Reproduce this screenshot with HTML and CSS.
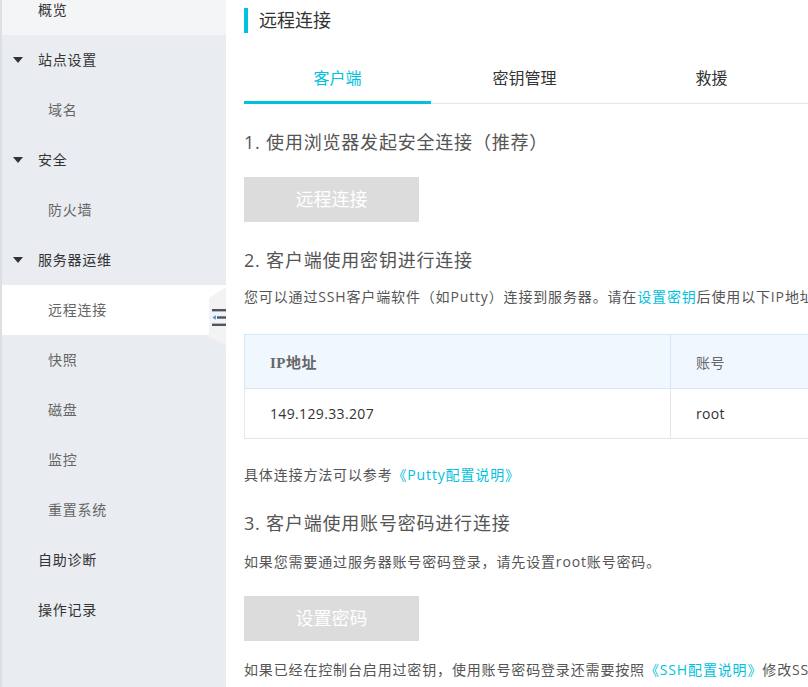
FILE: index.html
```html
<!DOCTYPE html>
<html lang="zh">
<head>
<meta charset="utf-8">
<link rel="stylesheet" href="styles.css">
</head>
<body>
<div class="page">
  <aside class="sidebar">
    <div class="item top lighter">概览</div>
    <div class="item top"><span class="caret"></span>站点设置</div>
    <div class="item sub">域名</div>
    <div class="item top"><span class="caret"></span>安全</div>
    <div class="item sub">防火墙</div>
    <div class="item top"><span class="caret"></span>服务器运维</div>
    <div class="item sub active">远程连接
      <div class="handle">
        <svg width="14" height="17" viewBox="0 0 14 17">
          <rect x="0" y="0" width="14" height="2.4" fill="#4b5565"/>
          <rect x="5" y="7.3" width="9" height="2.4" fill="#4b5565"/>
          <path d="M0.5 8.5 L3.8 6.2 L3.8 10.8 Z" fill="#3a8fd8"/>
          <rect x="0" y="14.6" width="14" height="2.4" fill="#4b5565"/>
        </svg>
      </div>
    </div>
    <div class="item sub">快照</div>
    <div class="item sub">磁盘</div>
    <div class="item sub">监控</div>
    <div class="item sub">重置系统</div>
    <div class="item top">自助诊断</div>
    <div class="item top">操作记录</div>
  </aside>
  <main class="main">
    <div class="inner">
      <h1 class="title">远程连接</h1>
      <div class="tabs">
        <div class="tab active">客户端</div>
        <div class="tab">密钥管理</div>
        <div class="tab">救援</div>
      </div>
      <h2 class="heading h-first">1. 使用浏览器发起安全连接（推荐）</h2>
      <div class="btn">远程连接</div>
      <h2 class="heading h-second">2. 客户端使用密钥进行连接</h2>
      <p class="para p-key">您可以通过SSH客户端软件（如Putty）连接到服务器。请在<span class="link">设置密钥</span>后使用以下IP地址和账号进行连接。</p>
      <table class="tbl">
        <thead>
          <tr><th class="c1 ip">IP地址</th><th class="c2">账号</th></tr>
        </thead>
        <tbody>
          <tr><td class="c1">149.129.33.207</td><td class="c2">root</td></tr>
        </tbody>
      </table>
      <p class="para p-ref">具体连接方法可以参考<span class="link">《Putty配置说明》</span></p>
      <h2 class="heading h-third">3. 客户端使用账号密码进行连接</h2>
      <p class="para p-pwd">如果您需要通过服务器账号密码登录，请先设置root账号密码。</p>
      <div class="btn btn-pwd">设置密码</div>
      <p class="para p-last">如果已经在控制台启用过密钥，使用账号密码登录还需要按照<span class="link">《SSH配置说明》</span>修改SSH配置。</p>
    </div>
  </main>
</div>
</body>
</html>
```

FILE: styles.css
```css
* { box-sizing: border-box; }
html, body {
  margin: 0;
  padding: 0;
  background: #ffffff;
  font-family: "Open Sans", "Noto Sans CJK SC", sans-serif;
  overflow: hidden;
}
.page {
  display: flex;
  width: 808px;
  height: 687px;
  overflow: hidden;
}
.sidebar {
  width: 226px;
  flex: 0 0 226px;
  background: #e9ecf0;
  border-left: 2px solid #dcdfe4;
  margin-top: -15px;
  height: 702px;
  position: relative;
  z-index: 2;
}
.item {
  height: 50px;
  line-height: 50px;
  font-size: 14px;
  letter-spacing: 0.75px;
  display: flex;
  align-items: center;
  position: relative;
}
.item.top {
  color: #333333;
  padding-left: 36px;
}
.item.sub {
  color: #666666;
  padding-left: 46px;
}
.item.lighter { background: #f4f5f7; }
.item.active { background: #ffffff; }
.caret {
  position: absolute;
  left: 11px;
  top: 22px;
  width: 0;
  height: 0;
  border-left: 5.5px solid transparent;
  border-right: 5.5px solid transparent;
  border-top: 6px solid #333333;
}
.handle {
  position: absolute;
  right: 0;
  top: 2px;
  width: 17px;
  height: 58px;
  background: #f3f3f4;
  clip-path: polygon(0 11px, 100% 0, 100% 100%, 0 calc(100% - 8px));
  display: flex;
  align-items: center;
  justify-content: flex-end;
  padding-top: 2px;
  z-index: 3;
}
.handle svg { display: block; }
.main {
  flex: 1 1 auto;
  overflow: hidden;
  position: relative;
}
.inner {
  width: 1000px;
  padding: 8px 0 0 18px;
  position: relative;
}
.title {
  margin: 0;
  font-size: 18px;
  font-weight: normal;
  color: #333333;
  height: 25px;
  line-height: 25px;
  border-left: 4px solid #00c1de;
  padding-left: 11px;
}
.tabs {
  display: flex;
  margin-top: 22px;
  border-bottom: 1px solid #e5e7eb;
}
.tab {
  width: 187px;
  height: 49px;
  line-height: 47px;
  text-align: center;
  font-size: 16px;
  color: #333333;
  border-bottom: 3px solid transparent;
  margin-bottom: -1px;
}
.tab.active {
  color: #00c1de;
  border-bottom-color: #00c1de;
}
.heading {
  margin: 0;
  font-size: 18px;
  font-weight: normal;
  letter-spacing: 0.8px;
  color: #555555;
  line-height: 24px;
  height: 24px;
}
.h-first { margin-top: 26px; }
.h-second { margin-top: 26px; }
.h-third { margin-top: 26px; }
.btn {
  margin-top: 23px;
  width: 175px;
  height: 45px;
  line-height: 45px;
  background: #dcdcdc;
  color: #ffffff;
  font-size: 18px;
  text-align: center;
}
.btn-pwd { margin-top: 24px; }
.para {
  margin: 0;
  font-size: 14px;
  letter-spacing: 0.85px;
  line-height: 20px;
  height: 20px;
  color: #555555;
  white-space: nowrap;
}
.p-key { margin-top: 15px; }
.p-ref { margin-top: 26px; }
.p-pwd { margin-top: 17px; }
.p-last { margin-top: 19px; }
.link { color: #00c1de; }
.tbl {
  margin-top: 27px;
  border-collapse: collapse;
  width: 800px;
  font-size: 14px;
}
.tbl th {
  height: 54px;
  background: #f0f7ff;
  border: 1px solid #d5e7f9;
  text-align: left;
  padding: 0 0 0 25px;
  font-weight: normal;
  color: #666666;
  letter-spacing: 0.5px;
}
.tbl th.ip {
  font-family: "Liberation Serif", "Noto Sans CJK SC", serif;
  font-weight: bold;
  font-size: 15px;
}
.tbl td {
  height: 50px;
  border: 1px solid #e6e6e6;
  padding: 0 0 0 25px;
  color: #333333;
  letter-spacing: 0.35px;
}
.tbl .c1 { width: 426px; }
```
